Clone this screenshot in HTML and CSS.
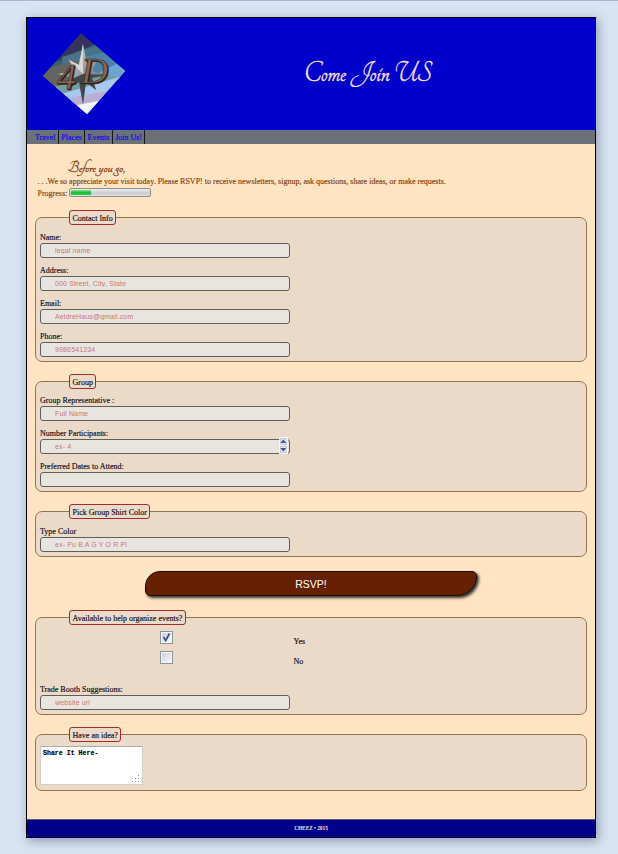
FILE: index.html
```html
<!DOCTYPE html>
<html lang="en">
<head>
<meta charset="utf-8">
<title>Come Join US</title>
<link rel="stylesheet" href="styles.css">
</head>
<body>
<div class="page">
  <header class="header">
    <svg class="logo" viewBox="0 0 84 84" width="84" height="84">
      <defs>
        <clipPath id="diamond"><path d="M39 1 83 39 45 82 1 44Z"/></clipPath>
        <linearGradient id="steel" x1="0" y1="0" x2="1" y2="1"><stop offset="0" stop-color="#e6e8e6"/><stop offset="1" stop-color="#454b50"/></linearGradient>
      </defs>
      <g clip-path="url(#diamond)">
        <path fill="#35335f" d="M0 0H84V84H0Z"/>
        <path fill="#30636c" d="M0 36 84-2V84H0Z"/>
        <path fill="#477287" d="M20 25 84 4V60H20Z"/>
        <path fill="#4d82aa" d="M26 29 84 15V60H26Z"/>
        <path fill="#656463" d="M0 38 36 27 42 55 0 64Z"/>
        <path fill="#86c5c6" d="M7 58 84 32V84H7Z"/>
        <path fill="#6fa5d5" d="M55 42 84 27V62L54 54Z"/>
        <path fill="#729da1" d="M10 55 64 43 84 46V60L17 66Z"/>
        <path fill="#a9c8ed" d="M16 63 84 43V84H16Z"/>
        <path fill="#bbaed0" d="M24 67 80 56V84H24Z"/>
        <path fill="#f4f5ff" d="M30 74 72 66V84H30Z"/>
      </g>
      <path fill="url(#steel)" d="M41 12 45 32 56 27 50 39 65 43 50 46 54 58 44 50 41 72 37 50 25 58 32 46 16 42 32 39 27 28 37 33Z"/>
      <path fill="#41484b" d="M41 42 65 43 50 46 54 58 44 50 41 72 37 50 25 58 32 46Z"/>
      <path fill="#d8d9d7" d="M41 12 41 42 27 28 37 33Z"/>
      <text class="logo-text logo-shadow" x="16" y="58" textLength="19" lengthAdjust="spacingAndGlyphs">4</text>
      <text class="logo-text" x="15" y="57" textLength="19" lengthAdjust="spacingAndGlyphs">4</text>
      <text class="logo-text logo-shadow" x="40" y="52" textLength="27" lengthAdjust="spacingAndGlyphs">D</text>
      <text class="logo-text" x="39" y="51" textLength="27" lengthAdjust="spacingAndGlyphs">D</text>
    </svg>
    <h1 class="title">Come Join US</h1>
  </header>
  <nav class="nav"><a>Travel</a><a>Places</a><a>Events</a><a>Join Us!</a></nav>
  <main class="main">
    <div class="intro">
      <h2 class="before">Before you go,</h2>
      <p class="welcome">. . .We so appreciate your visit today. Please RSVP! to receive newsletters, signup, ask questions, share ideas, or make requests.</p>
      <div class="progress-row">Progress: <span class="bar"><span class="fill"></span></span></div>
    </div>
    <section class="group contact">
      <div class="legend">Contact Info</div>
      <label class="row">Name:<input placeholder="legal name"></label>
      <label class="row">Address:<input placeholder="000 Street, City, State"></label>
      <label class="row">Email:<input placeholder="AeldreHaus@gmail.com"></label>
      <label class="row">Phone:<input placeholder="9986541234"></label>
    </section>
    <section class="group party">
      <div class="legend">Group</div>
      <label class="row">Group Representative :<input placeholder="Full Name"></label>
      <label class="row number">Number Participants:<input placeholder="ex- 4">
        <svg class="spinner" width="10" height="17" viewBox="0 0 10 17"><path fill="#fff" d="M0 0h9v17H0z"/><path fill="#dfe4ee" stroke="#a0a8b8" stroke-width=".6" d="M1.3 1.3h6v6.5h-6zM1.3 9.3h6v6.5h-6z"/><path fill="#3d5585" d="M1.4 6 4.3 2.5 7.2 6zM1.4 11 4.3 14.5 7.2 11z"/></svg>
      </label>
      <label class="row">Preferred Dates to Attend:<input></label>
    </section>
    <section class="group color">
      <div class="legend">Pick Group Shirt Color</div>
      <label class="row">Type Color<input placeholder="ex- Pu B A G Y O R Pi"></label>
    </section>
    <button class="rsvp">RSVP!</button>
    <section class="group help">
      <div class="legend">Available to help organize events?</div>
      <div class="choices">
        <label class="choice"><span class="box"><svg width="11" height="11" viewBox="0 0 11 11"><path d="M2.5 5 4.7 8.5 8.5 1.5" fill="none" stroke="#35508c" stroke-width="1.7"/></svg></span><span>Yes</span></label>
        <label class="choice"><span class="box"></span><span>No</span></label>
      </div>
      <label class="row">Trade Booth Suggestions:<input placeholder="website url"></label>
    </section>
    <section class="group idea">
      <div class="legend">Have an idea?</div>
      <div class="note">Share It Here-
        <svg class="grip" width="8" height="8" viewBox="0 0 8 8"><path fill="#888" d="M6 0h1v1H6zM3 3h1v1H3zM6 3h1v1H6zM0 6h1v1H0zM3 6h1v1H3zM6 6h1v1H6z"/></svg>
      </div>
    </section>
  </main>
  <footer class="footer">CHEEZ • 2015</footer>
</div>
</body>
</html>
```
FILE: styles.css
```css
* { box-sizing: border-box; }
html { background: #d8e3f3; }
body {
  margin: 0;
  height: 854px;
  overflow: hidden;
  padding: 16px 0 0 26px;
  border-top: 1px solid #a9b7cf;
  font: 8px/11px "Liberation Serif", serif;
  color: #100a1c;
}
.page {
  width: 570px;
  height: 821px;
  border: 1px solid #000;
  background: #ffe4c4;
  box-shadow: 2px 3px 10px rgba(70, 85, 110, .5);
  display: flex;
  flex-direction: column;
}
.header {
  height: 112px;
  background: #0000cd;
  display: flex;
  flex: none;
}
.logo { margin: 14px 0 0 15px; flex: none; }
.logo-text { font: italic 36px "Liberation Serif", serif; fill: #8a6552; stroke: #2d211d; stroke-width: .5; }
.logo-shadow { fill: #211a19; }
.title {
  margin: 42px 0 0 178px;
  font: 30px/28px "Tangerine", "Liberation Serif", serif;
  color: #ffe4d6;
  white-space: nowrap;
  -webkit-text-stroke: .35px;
}
.nav {
  height: 14px;
  flex: none;
  padding-left: 5.6px;
  background: #6b7079;
  display: flex;
  line-height: 15px;
  color: #0808e6;
}
.nav a { padding: 0 2.4px; border-right: 1px solid #15171a; -webkit-text-stroke: .15px; }
.main { flex: 1; padding: 16px 8px 0; }
.intro { height: 57px; padding-left: 2.5px; color: #843c0c; }
.before {
  margin: 0 0 0 30px;
  font: 17.5px/16px "Tangerine", "Liberation Serif", serif;
  white-space: nowrap;
  -webkit-text-stroke: .3px;
}
.welcome { margin: 0; white-space: nowrap; -webkit-text-stroke: .15px; }
.progress-row { display: flex; height: 11px; line-height: 13px; -webkit-text-stroke: .15px; }
.bar {
  width: 82px;
  height: 9px;
  margin: 1px 0 0 1.5px;
  padding: 1px;
  border: 1px solid #8f8f8f;
  border-radius: 2px;
  background: linear-gradient(#eee, #c9c9cf 60%, #e2e2e2);
}
.fill { display: block; width: 20px; height: 5px; background: linear-gradient(#8be28f, #17c12f 50%, #31cc48); }
.group {
  border: 1px solid #967452;
  border-radius: 7px;
  background: #ebdac7;
  padding: 0 4px;
  margin-bottom: 19px;
  -webkit-text-stroke: .15px;
}
.contact { height: 145px; }
.party { height: 111px; }
.color { height: 46px; margin-bottom: 14px; }
.help { height: 98px; }
.idea { height: 57px; margin-bottom: 0; }
.legend {
  width: fit-content;
  height: 15px;
  margin: -8px 0 7px 29px;
  padding: 1px 2.5px 0;
  border: 1px solid #a52a2a;
  border-radius: 3px;
  background: #ebdac7;
  line-height: 13px;
  white-space: nowrap;
}
.party .legend { margin-bottom: 6px; }
.row { display: block; height: 26px; margin-bottom: 7px; position: relative; }
input {
  display: block;
  width: 250px;
  height: 15px;
  padding: 0 14px;
  border: 1px solid #625e5c;
  border-radius: 3px;
  background: #e8e5e0;
  font: 7px/13px "Liberation Sans", sans-serif;
  letter-spacing: .14px;
  -webkit-text-stroke: 0;
}
input::placeholder { color: #cb7770; opacity: 1; }
.spinner { position: absolute; left: 239px; top: 9px; }
.rsvp {
  display: block;
  width: 332px;
  height: 25px;
  margin: 0 0 21px 110px;
  padding: 1px 0 0;
  border: 1px solid #1f0d04;
  border-radius: 15px 5px 20px 5px;
  background: #662200;
  box-shadow: 2px 2px 3px #333;
  color: #fff;
  font: 10.5px/19px "Liberation Sans", sans-serif;
}
.choices { height: 53px; margin-top: -1px; }
.choice { display: flex; height: 20px; padding-left: 120px; }
.choice > span:last-child { margin: 5px 0 0 120.5px; }
.box {
  width: 13px;
  height: 13px;
  border: 1px solid #8c9299;
  background: linear-gradient(135deg, #cbd0d8, #f8f8f8) center / 9px 9px no-repeat #f6f6f6;
}
.box svg { display: block; }
.idea .legend { margin-bottom: 4px; }
.note {
  position: relative;
  width: 103px;
  height: 39px;
  padding: 1px 2px;
  border: 1px solid #d8d0c7;
  border-top-color: #aaa;
  background: #fff;
  font: bold 6.6px/11px "Liberation Mono", monospace;
  color: #000;
}
.grip { position: absolute; right: 2px; bottom: 1px; }
.footer {
  height: 18px;
  flex: none;
  border-top: 1px solid #59597a;
  background: #00008b;
  color: #ffe4d6;
  font-size: 5.3px;
  font-weight: bold;
  line-height: 17px;
  text-align: center;
}
```
